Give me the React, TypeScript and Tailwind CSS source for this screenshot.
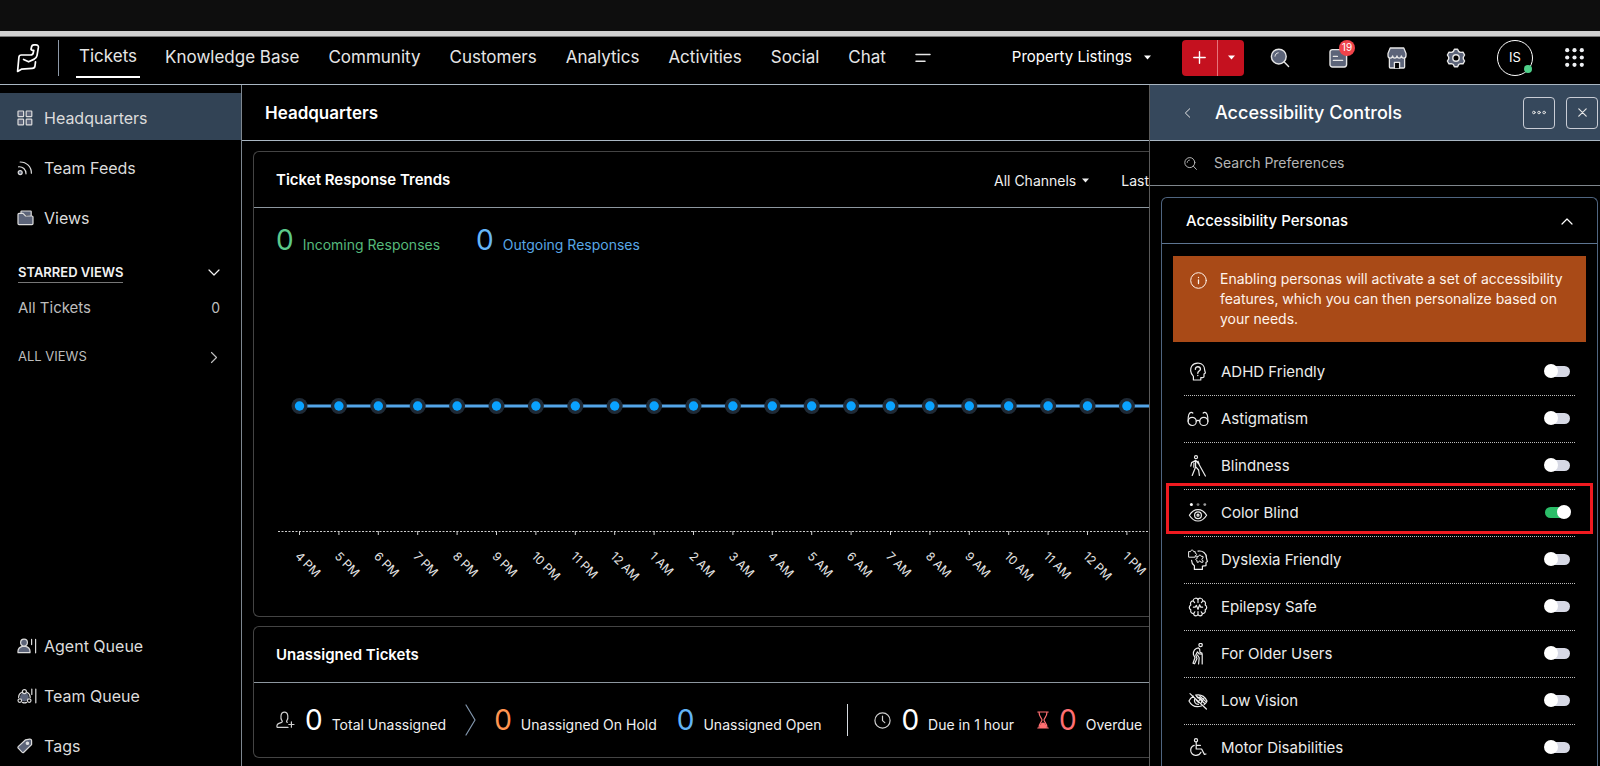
import React, { useState } from "react";

type IconProps = { className?: string };

const line = {
  fill: "none",
  stroke: "currentColor",
  strokeWidth: 1.2,
  strokeLinecap: "round" as const,
  strokeLinejoin: "round" as const,
};

const tone = { ...line, fill: "#5c6479" };

const Logo = () => (
  <svg width="24" height="30" viewBox="0 0 24 30" className="text-white" {...line} strokeWidth={1.7}>
    <path d="M15.2 6.2 15.4 4.4C15.6 2.8 16.4 1.8 18 1.8H19.8C21.6 1.8 22.6 2.8 22.4 4.4L21 12.6C20.7 14.4 19.6 15.6 17.8 16.4L12.6 18.8 7.6 16.4" />
    <path d="M15.2 6.2C15.2 7 16.4 7.4 17.8 7.4L17.2 10C16.9 11.4 15.8 12 14.4 12H5.4C3.8 12 3 12.8 2.9 14.2L1.6 28.4 5.4 26.2 16.2 25.4C17.8 25.3 18.8 24.4 19 22.8L19.5 18.8" />
  </svg>
);

const GridIcon = () => (
  <svg width="16" height="16" viewBox="0 0 16 16" {...tone}>
    <rect x="1" y="1" width="5.6" height="5.6" rx=".6" />
    <rect x="9.2" y="1" width="5.6" height="5.6" rx=".6" />
    <rect x="1" y="9.2" width="5.6" height="5.6" rx=".6" />
    <rect x="9.2" y="9.2" width="5.6" height="5.6" rx=".6" />
  </svg>
);

const FeedIcon = () => (
  <svg width="16" height="16" viewBox="0 0 16 16" {...line}>
    <circle cx="3.2" cy="12.6" r="2" fill="#5c6479" />
    <path d="M1.6 6.8C5.8 6.4 9 9.4 9 13.8" />
    <path d="M3.2 2C9.6 2 14.4 6.8 14.4 13.2" />
  </svg>
);

const FolderIcon = () => (
  <svg width="17" height="16" viewBox="0 0 17 16" {...tone}>
    <path d="M4 4V1.6C4 1.2 4.2 1 4.6 1H13.6C14 1 14.2 1.2 14.2 1.6V6" />
    <path d="M1 4.4C1 3.8 1.4 3.4 2 3.4H6L8.6 6H15C15.6 6 16 6.4 16 7V13.6C16 14.2 15.6 14.6 15 14.6H2C1.4 14.6 1 14.2 1 13.6Z" />
  </svg>
);

const AgentIcon = () => (
  <svg width="20" height="16" viewBox="0 0 20 16" {...tone}>
    <path d="M1 14.6C.6 11 3 9 5.4 8.4H8.6C11 9 13.4 11 13 14.6Z" />
    <circle cx="7" cy="4.6" r="3.4" />
    <path d="M14.6 1.4V6.6M18.6 1.4V14.8" />
  </svg>
);

const TeamIcon = () => (
  <svg width="20" height="16" viewBox="0 0 20 16" {...line}>
    <circle cx="7.4" cy="9" r="4.4" fill="#5c6479" stroke="none" />
    <circle cx="7.4" cy="3.6" r="2" fill="#000" />
    <circle cx="2.8" cy="12.6" r="1.8" fill="#000" />
    <circle cx="12.2" cy="12.6" r="1.8" fill="#000" />
    <path d="M4.4 4.4C2.4 5.6 1.6 7.2 1.6 9.4M10.4 4.4C12.4 5.6 13.2 7.2 13.2 9.4M5.4 14.4C6.6 15 8.4 15 9.6 14.4" />
    <path d="M14.8 1V6.4M18.8 1V14.8" />
  </svg>
);

const TagIcon = () => (
  <svg width="16" height="16" viewBox="0 0 16 16" {...tone}>
    <path d="M8.6 1.8 12.6 1.2C13.8 1 14.6 1.8 14.6 2.8V6.6L6.8 14.2C6.2 14.8 5.6 14.8 5 14.2L1.2 10.2C.8 9.6.8 9 1.4 8.4Z" />
    <circle cx="10.4" cy="5.2" r="1.2" fill="#dfe3ea" />
  </svg>
);

const SearchIcon = () => (
  <svg width="20" height="20" viewBox="0 0 20 20" {...tone} strokeWidth={1.4}>
    <circle cx="8.8" cy="8.6" r="7.4" />
    <path d="M5 8.2C5.2 6.4 6.4 5 8.2 4.8" strokeWidth={1} />
    <path d="M14.2 14 18.6 18.6" />
  </svg>
);

const SmallSearchIcon = () => (
  <svg width="13" height="13" viewBox="0 0 13 13" {...line} strokeWidth={1}>
    <circle cx="5.8" cy="5.6" r="5" />
    <path d="M3.2 5.4C3.3 4.2 4.2 3.2 5.4 3.1M9.4 9.2 12.4 12.4" />
  </svg>
);

const NoteIcon = () => (
  <svg width="19" height="20" viewBox="0 0 19 20" {...tone} strokeWidth={1.4}>
    <rect x="1" y="1.6" width="16.6" height="17.4" rx="2.4" />
    <path d="M4.4 8.4H8.4M4.4 12.4H13.6" />
  </svg>
);

const StoreIcon = () => (
  <svg width="20" height="22" viewBox="0 0 20 22" {...tone} strokeWidth={1.3}>
    <path d="M2.4 10V20C2.4 20.6 2.8 21 3.4 21H16.6C17.2 21 17.6 20.6 17.6 20V10Z" />
    <path d="M3.2 1H16.8L19 6.6V8.6C19 12 14.6 12 14.4 8.8 14.2 12 10.2 12 10 8.8 9.8 12 5.8 12 5.6 8.8 5.4 12 1 12 1 8.6V6.6Z" />
    <path d="M7.4 21V15.4H12.6V21" fill="#000" />
  </svg>
);

const GearIcon = () => (
  <svg width="20" height="20" viewBox="0 0 20 20" {...tone} strokeWidth={1.4}>
    <path d="M8.4 1.2H11.6L12.6 3.4C13.2 3.9 13.9 4.2 14.6 4.4L17 4.2 18.6 7 17.4 9C17.2 9.7 17.2 10.4 17.4 11.1L18.6 13 17 15.8 14.6 15.6C13.9 15.8 13.2 16.1 12.6 16.6L11.6 18.8H8.4L7.4 16.6C6.8 16.1 6.1 15.8 5.4 15.6L3 15.8 1.4 13 2.6 11.1C2.8 10.4 2.8 9.7 2.6 9L1.4 7 3 4.2 5.4 4.4C6.1 4.2 6.8 3.9 7.4 3.4Z" />
    <circle cx="10" cy="10" r="3.2" fill="#000" />
  </svg>
);

const AppsIcon = () => (
  <svg width="19" height="19" viewBox="0 0 19 19" fill="#eef0f3">
    {[2.2, 9.5, 16.8].map((y) =>
      [2.2, 9.5, 16.8].map((x) => <circle key={`${x}-${y}`} cx={x} cy={y} r="2.1" />),
    )}
  </svg>
);

const Caret = () => (
  <svg width="7" height="5" viewBox="0 0 7 5" fill="currentColor">
    <path d="M0 .4H7L3.5 4.4Z" />
  </svg>
);

const Chevron = ({ className }: IconProps) => (
  <svg width="12" height="7" viewBox="0 0 12 7" className={className} {...line}>
    <path d="M1 1 6 6 11 1" />
  </svg>
);

const UserPlusIcon = () => (
  <svg width="19" height="18" viewBox="0 0 19 18" {...line}>
    <path d="M12 16.4H1.6C.6 16.4.6 13.4 2.4 12.6L5.6 11.4C6.6 11 6.4 10.2 5.8 9.4 4.6 8 4 1.2 8.4 1.2S12.2 8 11 9.4C10.4 10.2 10.4 11 11.2 11.4" />
    <path d="M15.4 10.8V16.2M12.8 13.5H18" />
  </svg>
);

const ClockIcon = () => (
  <svg width="17" height="17" viewBox="0 0 17 17" {...line}>
    <circle cx="8.5" cy="8.5" r="7.6" />
    <path d="M8.5 4V8.6L10.8 10.6" />
  </svg>
);

const HourglassIcon = () => (
  <svg width="12" height="18" viewBox="0 0 12 18" className="text-[#ff6f72]" {...line}>
    <path d="M.8 1H11.2M.8 17H11.2M2 1C2 6 5 7 5 9S2 12 2 17M10 1C10 6 7 7 7 9S10 12 10 17" />
    <path d="M3.4 16.4C3.4 13.4 4.6 12.4 6 12.2 7.4 12.4 8.6 13.4 8.6 16.4Z" fill="currentColor" />
  </svg>
);

const InfoIcon = () => (
  <svg width="17" height="17" viewBox="0 0 17 17" {...line} strokeWidth={1}>
    <circle cx="8.5" cy="8.5" r="7.8" />
    <path d="M8.5 7.8V11.6M8.5 5.3V5.6" strokeWidth={1.3} />
  </svg>
);

const AdhdIcon = () => (
  <svg width="22" height="22" viewBox="0 0 22 22" {...line}>
    <path d="M6.4 19V15.4C3 12 3 7.6 4.8 5 6.6 2.4 9.4 2 11.6 2.2 15.4 2.4 17.6 5.4 17.6 8.8L18.4 12 17 13V15.4C17 16.6 15.6 16.8 13.8 16.6V19H6.4" />
    <path d="M8.4 8.2C8.4 4.8 13.6 5 13.4 8.2 13.2 10.2 10.8 10 10.8 12.2M10.8 14.4V14.6" strokeWidth={1.4} />
  </svg>
);

const GlassesIcon = () => (
  <svg width="22" height="22" viewBox="0 0 22 22" {...line}>
    <circle cx="5.2" cy="13.4" r="4.1" />
    <circle cx="16.8" cy="13.4" r="4.1" />
    <path d="M9.2 13.2C10.2 12.2 11.8 12.2 12.8 13.2M1.1 13.2C1 9.4 1.8 4.8 4 4.4 4.8 4.3 5.4 4.6 5.8 5M20.9 13.2C21 9.4 20.2 4.8 18 4.4 17.2 4.3 16.6 4.6 16.2 5" />
  </svg>
);

const BlindIcon = () => (
  <svg width="22" height="22" viewBox="0 0 22 22" {...line}>
    <circle cx="9" cy="2.2" r="1.5" />
    <path d="M3.8 11.2 4.6 7.6 8.8 5.4 11.8 9 18.4 21M8.6 5.6V12L5.2 20.4M9 12.2 11.6 15 12.4 20.4M11 6.2 12.2 9.2M7 8 6.8 12.2" />
  </svg>
);

const ColorBlindIcon = () => (
  <svg width="22" height="22" viewBox="0 0 22 22" {...line}>
    <circle cx="4.4" cy="2.6" r="1.5" fill="#fff" stroke="none" />
    <circle cx="11" cy="2.6" r="1.4" fill="#777" stroke="none" />
    <circle cx="17.8" cy="2.6" r="1.4" fill="#999" stroke="none" />
    <path d="M2.4 13.2C5 9 8 7.6 11 7.6S17 9 19.6 13.2C17 17.4 14 19 11 19S5 17.4 2.4 13.2Z" />
    <circle cx="11" cy="13.2" r="3.4" />
    <circle cx="11" cy="13.2" r="1" />
  </svg>
);

const DyslexiaIcon = () => (
  <svg width="22" height="22" viewBox="0 0 22 22" {...line}>
    <path d="M2 2.6H3.6C3.6.6 6.6.6 6.6 2.6H8.2V4.2C10 4.2 10 6.8 8.2 6.8V8.2H2Z" strokeWidth={1} />
    <path d="M10 7.4H11.6C11.6 5.6 14.2 5.6 14.2 7.4H16V9.2C14.4 9.2 14.4 11.6 16 11.6V13.2H13.8C13.8 11.6 11.6 11.6 11.6 13.2H10V11.4C8.2 11.4 8.2 9.2 10 9.2Z" strokeWidth={1} />
    <path d="M11 2.2C15.6 1.2 19.6 4.4 19.4 8.8L20.4 12.6 19 13.4V16.6L15.4 17.2V20.4H7.4V16.8C5.6 15.4 4.6 13.8 4.6 11.4" />
  </svg>
);

const BrainIcon = () => (
  <svg width="22" height="22" viewBox="0 0 22 22" {...line}>
    <path d="M11 4C10.4 1.4 6.6 1.6 6 4.8 3.8 5 3 7.2 3.8 9 1.8 10.2 1.8 12.8 3.8 13.8 3.2 16 4.4 17.6 6.4 17.6 7 20.6 10.6 20.6 11 18 11.4 20.6 15 20.6 15.6 17.6 17.6 17.6 18.8 16 18.2 13.8 20.2 12.8 20.2 10.2 18.2 9 19 7.2 18.2 5 16 4.8 15.4 1.6 11.6 1.4 11 4V6.6M11 18V15.6" />
    <path d="M6.4 11.2H8.2L9.4 9.4 11 13.4 12.6 8.8 13.8 11.2H15.6M6.4 5.2 7.6 6.6M15.6 5.2 14.4 6.6M6.8 17.4 7.8 15.8M15.2 17.4 14.2 15.8" />
  </svg>
);

const OlderIcon = () => (
  <svg width="22" height="22" viewBox="0 0 22 22" {...line}>
    <circle cx="13.6" cy="2" r="1.7" />
    <path d="M11.4 4.8C8.4 5 5.8 7.8 6.4 11.6L8 14.8 6 20.2 7.6 20.8 10 15.6 8.8 12 10.4 8.8 12.2 11 15 11.2 15 10 13 9.4 12.6 6ZM10.4 12 12.2 14.8 11.6 21M15.2 11.2V21" />
  </svg>
);

const LowVisionIcon = () => (
  <svg width="22" height="22" viewBox="0 0 22 22" {...line}>
    <path d="M3 3.6 19.4 19M6.4 6.2C4.2 7.4 2.8 9 2 11 4.6 16 9.4 17.6 14.4 16M8.6 5.2C13.6 4.2 17.8 6.6 20 11 19.4 12.6 18.4 13.8 17.2 14.6M7.8 8.8C6.6 11.8 8.6 14.4 11.4 14.4M9.6 6.2 18 13.8M12.4 5.6 18.8 11.6" />
    <path d="M10.4 7.6C13 6.6 15.2 8.6 14.8 11.6M9.2 10 11.6 12.6M11 12 14.2 8M14 13.2 16.8 8.6" />
  </svg>
);

const WheelchairIcon = () => (
  <svg width="22" height="22" viewBox="0 0 22 22" {...line}>
    <circle cx="9" cy="3.2" r="1.6" />
    <path d="M9.2 5.2V12H14.6L17.4 17.4 19 17M9.4 8.4H13.4M7.2 8.4C4.6 9.4 3.4 11.8 3.8 14.2 4.8 19.2 11.4 20 14 15.2" />
  </svg>
);

const navItems = ["Knowledge Base", "Community", "Customers", "Analytics", "Activities", "Social", "Chat"];

const personas = [
  { name: "ADHD Friendly", Icon: AdhdIcon },
  { name: "Astigmatism", Icon: GlassesIcon },
  { name: "Blindness", Icon: BlindIcon },
  { name: "Color Blind", Icon: ColorBlindIcon },
  { name: "Dyslexia Friendly", Icon: DyslexiaIcon },
  { name: "Epilepsy Safe", Icon: BrainIcon },
  { name: "For Older Users", Icon: OlderIcon },
  { name: "Low Vision", Icon: LowVisionIcon },
  { name: "Motor Disabilities", Icon: WheelchairIcon },
];

const hours = [
  "4 PM", "5 PM", "6 PM", "7 PM", "8 PM", "9 PM", "10 PM", "11 PM", "12 AM", "1 AM", "2 AM",
  "3 AM", "4 AM", "5 AM", "6 AM", "7 AM", "8 AM", "9 AM", "10 AM", "11 AM", "12 PM", "1 PM",
];

const Header = () => (
  <header className="flex h-12 shrink-0 items-center border-b border-[#a9b6c2] pb-1.5 text-[#e6e6e6]">
    <a href="#" aria-label="Desk home" className="ml-4">
      <Logo />
    </a>
    <div className="ml-[18px] h-9 w-px bg-[#8d99a8]" />
    <nav className="ml-[17px] flex items-center gap-[29px] text-[17px]">
      <a href="#" className="-mr-1 flex h-10 items-center border-b-2 border-white px-[3px]">
        Tickets
      </a>
      {navItems.map((item) => (
        <a href="#" key={item}>
          {item}
        </a>
      ))}
      <button aria-label="More modules">
        <svg width="16" height="10" viewBox="0 0 16 10" {...line} strokeWidth={1.5}>
          <path d="M1 1.4H15M1 8.2H10" />
        </svg>
      </button>
    </nav>
    <div className="ml-auto flex items-center">
      <button className="flex items-center gap-3 text-[15px] text-white">
        Property Listings <Caret />
      </button>
      <div className="ml-[31px] flex h-9 w-[62px] overflow-hidden rounded bg-[#c5111f] text-white">
        <button aria-label="Add" className="flex flex-1 items-center justify-center border-r border-[#e5737b]">
          <svg width="13" height="13" viewBox="0 0 13 13" {...line} strokeWidth={1.4}>
            <path d="M6.5.8V12.2M.8 6.5H12.2" />
          </svg>
        </button>
        <button aria-label="Add options" className="flex w-[26px] items-center justify-center">
          <Caret />
        </button>
      </div>
      <div className="ml-[26px] flex items-center gap-[39px]">
        <button aria-label="Search">
          <SearchIcon />
        </button>
        <button aria-label="Notifications" className="relative">
          <NoteIcon />
          <span className="absolute -top-2 left-2.5 flex size-4 items-center justify-center rounded-full bg-[#f0434a] text-[10px] text-white">
            19
          </span>
        </button>
        <button aria-label="Marketplace">
          <StoreIcon />
        </button>
        <button aria-label="Setup">
          <GearIcon />
        </button>
      </div>
      <button className="relative ml-[31px] flex size-9 items-center justify-center rounded-full border border-white text-[13px] text-white">
        IS
        <span className="absolute right-0 bottom-0.5 size-2 rounded-full bg-[#4fd08a]" />
      </button>
      <button aria-label="Apps" className="mr-4 ml-8">
        <AppsIcon />
      </button>
    </div>
  </header>
);

const SideLink = ({ icon, children }: { icon: React.ReactNode; children: React.ReactNode }) => (
  <a href="#" className="flex h-[50px] items-center pl-[17px] text-base text-[#dcdcdc]">
    <span className="w-[27px]">{icon}</span>
    {children}
  </a>
);

const Sidebar = () => (
  <aside className="flex w-[242px] shrink-0 flex-col border-r border-[#7e8790]">
    <a href="#" className="mt-2 flex h-[47px] items-center bg-[#324355] pt-0.5 pl-[17px] text-base text-[#dcdcdc]">
      <span className="w-[27px]">
        <GridIcon />
      </span>
      Headquarters
    </a>
    <div className="mt-[3px]">
      <SideLink icon={<FeedIcon />}>Team Feeds</SideLink>
      <SideLink icon={<FolderIcon />}>Views</SideLink>
    </div>
    <div className="mt-4 flex flex-col pr-[21px] pl-[18px] text-[#bdbdbd]">
      <button className="flex h-[26px] items-center justify-between text-[#f2f2f2]">
        <span className="border-b border-[#777] pt-0.5 text-[13px] font-semibold">STARRED VIEWS</span>
        <Chevron />
      </button>
      <a href="#" className="mt-[11px] flex h-6 items-center justify-between text-[15px]">
        All Tickets <span className="text-sm">0</span>
      </a>
      <button className="mt-[25px] flex h-6 items-center justify-between">
        <span className="text-[13px]">ALL VIEWS</span>
        <Chevron className="-rotate-90" />
      </button>
    </div>
    <div className="mt-auto -mb-[5px]">
      <SideLink icon={<AgentIcon />}>Agent Queue</SideLink>
      <SideLink icon={<TeamIcon />}>Team Queue</SideLink>
      <SideLink icon={<TagIcon />}>Tags</SideLink>
    </div>
  </aside>
);

const Stat = ({ color, label, labelColor }: { color: string; label: string; labelColor?: string }) => (
  <div className="flex shrink-0 items-baseline gap-[9px]">
    <span className={`text-[28px] leading-8 ${color}`}>0</span>
    <span className={`text-sm ${labelColor ?? "text-[#f0f0f0]"}`}>{label}</span>
  </div>
);

const TrendChart = () => {
  const step = 39.4;
  const start = 45.5;
  return (
    <svg className="block h-[360px] w-full" role="img" aria-label="Outgoing responses by hour">
      <line x1={start} y1="150" x2="100%" y2="150" stroke="#54a5e8" strokeWidth="3" />
      <line x1="24" y1="275.5" x2="100%" y2="275.5" stroke="#cfcfcf" strokeWidth="1" strokeDasharray="2 1.5" />
      {hours.map((hour, i) => {
        const x = start + i * step;
        return (
          <g key={hour + i}>
            <circle cx={x} cy="150" r="8" fill="#1f2a36" />
            <circle cx={x} cy="150" r="4.7" fill="#0aa2ff" />
            <line x1={x} y1="275" x2={x} y2="279" stroke="#cfcfcf" />
            <text transform={`translate(${x - 5} 301) rotate(45)`} fontSize="12" fill="#e4e4e4">
              {hour}
            </text>
          </g>
        );
      })}
    </svg>
  );
};

const Dashboard = () => (
  <main className="flex min-w-0 flex-1 flex-col overflow-hidden">
    <h1 className="flex h-14 shrink-0 items-center border-b border-[#a9b6c2] pt-0.5 pl-[23px] text-[17px] font-semibold text-white">
      Headquarters
    </h1>
    <div className="flex flex-col gap-[9px] pt-2.5 pl-[11px]">
      <section className="rounded-l-md border border-r-0 border-[#444]">
        <div className="flex h-14 items-center border-b border-[#8d979f] pt-0.5 pl-[22px]">
          <h2 className="text-[15px] font-semibold text-white">Ticket Response Trends</h2>
          <div className="ml-auto flex items-center gap-8 text-sm text-[#f0f0f0]">
            <button className="flex items-center gap-1.5">
              All Channels <Caret />
            </button>
            <button>Last</button>
          </div>
        </div>
        <div className="flex gap-9 pt-4 pl-[22px]">
          <Stat color="text-[#5cc98a]" label="Incoming Responses" labelColor="text-[#56b97b]" />
          <Stat color="text-[#66b6f8]" label="Outgoing Responses" labelColor="text-[#58a7e6]" />
        </div>
        <TrendChart />
      </section>
      <section className="rounded-l-md border border-r-0 border-[#444]">
        <div className="flex h-14 items-center border-b border-[#8d979f] pt-0.5 pl-[22px]">
          <h2 className="text-[15px] font-semibold text-white">Unassigned Tickets</h2>
        </div>
        <div className="flex h-[74px] items-center overflow-hidden pl-[22px] text-[#d0d0d0]">
          <UserPlusIcon />
          <div className="ml-2.5">
            <Stat color="text-white" label="Total Unassigned" />
          </div>
          <svg width="11" height="32" viewBox="0 0 11 32" className="mr-[18px] ml-[19px] shrink-0" {...line} stroke="#8296ad">
            <path d="M1 1 10 16 1 31" />
          </svg>
          <div className="flex shrink-0 gap-5">
            <Stat color="text-[#ff9450]" label="Unassigned On Hold" />
            <Stat color="text-[#62b4f7]" label="Unassigned Open" />
          </div>
          <div className="mr-[26px] ml-[26px] h-8 w-px shrink-0 bg-[#d5dae0]" />
          <ClockIcon />
          <div className="mr-[23px] ml-2.5">
            <Stat color="text-white" label="Due in 1 hour" />
          </div>
          <HourglassIcon />
          <div className="ml-2.5">
            <Stat color="text-[#ff6f72]" label="Overdue" />
          </div>
        </div>
      </section>
    </div>
  </main>
);

const Controls = () => {
  const [enabled, setEnabled] = useState<string[]>(["Color Blind"]);

  const toggle = (name: string) =>
    setEnabled((prev) => (prev.includes(name) ? prev.filter((n) => n !== name) : [...prev, name]));

  return (
    <aside className="flex w-[451px] shrink-0 flex-col overflow-hidden border-l border-[#5a5a5a]">
      <div className="flex h-14 shrink-0 items-center border-b border-[#a9b6c2] bg-[#36485c] pr-0.5 pl-[34px] text-[#e6e6e6]">
        <button aria-label="Back" className="flex w-[31px]">
          <svg width="7" height="10" viewBox="0 0 8 12" {...line}>
            <path d="M6.6 1 1.4 6 6.6 11" />
          </svg>
        </button>
        <h2 className="text-lg font-medium text-white">Accessibility Controls</h2>
        <div className="ml-auto flex gap-[11px]">
          <button aria-label="More" className="flex size-8 items-center justify-center rounded border border-[#c9cdd6]">
            <svg width="14" height="5" viewBox="0 0 15 5" {...line} strokeWidth={1}>
              <circle cx="2" cy="2.5" r="1.4" />
              <circle cx="7.5" cy="2.5" r="1.4" />
              <circle cx="13" cy="2.5" r="1.4" />
            </svg>
          </button>
          <button aria-label="Close" className="flex size-8 items-center justify-center rounded border border-[#c9cdd6]">
            <svg width="9" height="9" viewBox="0 0 9 9" {...line}>
              <path d="M.8.8 8.2 8.2M8.2.8.8 8.2" />
            </svg>
          </button>
        </div>
      </div>
      <label className="flex h-[45px] shrink-0 items-center gap-[17px] border-b border-[#7f868c] pl-[34px] text-[#b5b5b5]">
        <SmallSearchIcon />
        <input
          type="text"
          aria-label="Search Preferences"
          placeholder="Search Preferences"
          className="flex-1 bg-transparent text-sm outline-none placeholder:text-[#b5b5b5]"
        />
      </label>
      <section className="mt-[11px] mr-0.5 ml-[11px] flex-1 rounded-t-md border border-b-0 border-[#4f6580]">
        <button className="flex h-[46px] w-full items-center justify-between border-b border-[#5d7592] px-6 pt-0.5 text-[15px] font-medium text-white">
          Accessibility Personas
          <Chevron className="rotate-180" />
        </button>
        <div className="mx-[11px] mt-3 flex h-[86px] gap-[13px] bg-[#a94a17] pt-[13px] pl-[17px] text-sm leading-5 text-[#fff4ec]">
          <span className="pt-[3px]">
            <InfoIcon />
          </span>
          <p className="flex-1">
            Enabling personas will activate a set of accessibility features, which you can then personalize based on
            your needs.
          </p>
        </div>
        <ul className="mx-[22px] mt-[7px]">
          {personas.map(({ name, Icon }) => (
            <li key={name} className="relative border-b border-dotted border-[#bdbdbd] text-[#ececec]">
              <label className="flex h-[46px] items-center pr-[5px] pl-[3px]">
                <Icon />
                <span className="ml-3 text-[15px]">{name}</span>
                <input
                  type="checkbox"
                  role="switch"
                  checked={enabled.includes(name)}
                  onChange={() => toggle(name)}
                  className="peer sr-only"
                />
                <span className="mb-0.5 ml-auto flex h-[11px] w-[25px] items-center rounded-full bg-[#d6d8e4] px-[-1px] peer-checked:justify-end peer-checked:bg-[#2bbd68]">
                  <span className="-mx-px size-[14px] shrink-0 rounded-full bg-white" />
                </span>
              </label>
              {name === "Color Blind" && (
                <div className="pointer-events-none absolute -inset-x-[18px] -top-[7px] bottom-0.5 border-[3px] border-[#f01a20]" />
              )}
            </li>
          ))}
        </ul>
      </section>
    </aside>
  );
};

const App = () => {
  return (
    <div className="flex h-screen flex-col overflow-hidden bg-black font-[Inter,'Open_Sans',sans-serif] text-white">
      <div className="h-[31px] shrink-0 bg-[#0e0e0e]" />
      <div className="h-1.5 shrink-0 border-b border-[#777] bg-[#d0d0d0]" />
      <Header />
      <div className="flex min-h-0 flex-1">
        <Sidebar />
        <Dashboard />
        <Controls />
      </div>
    </div>
  );
};

export default App;
